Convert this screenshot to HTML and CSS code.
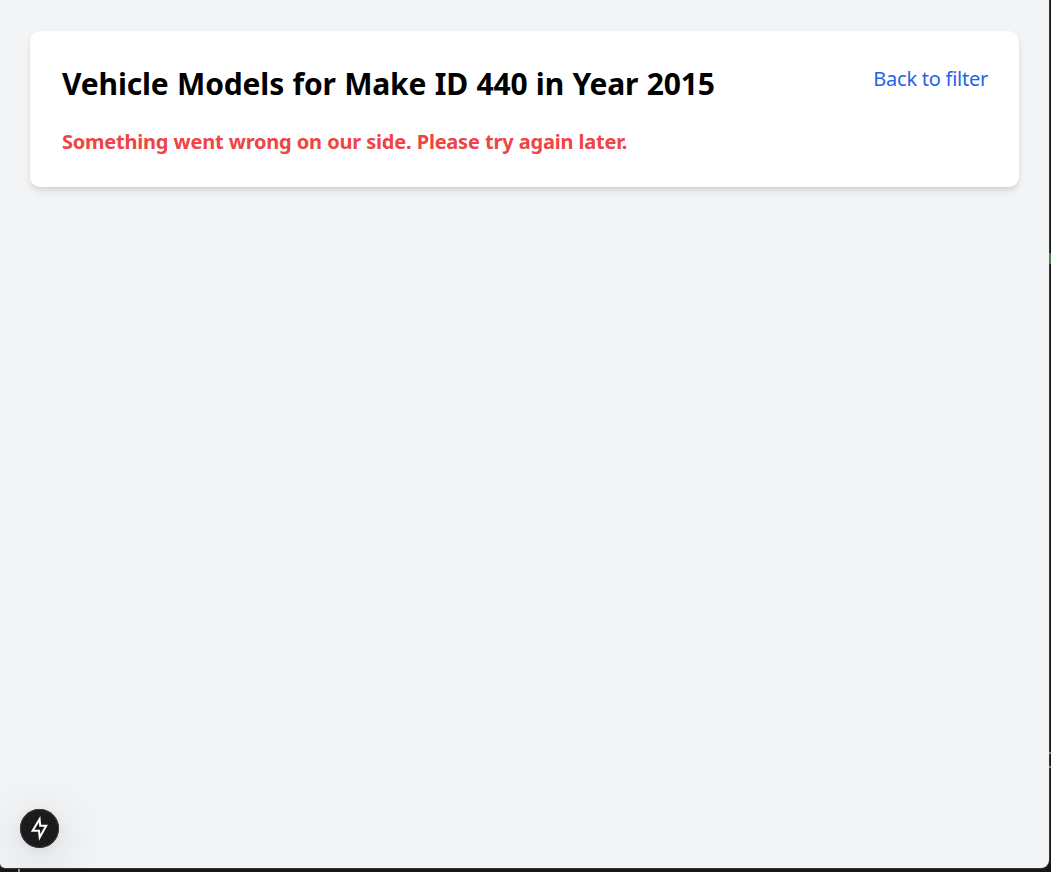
FILE: index.html
```html
<!DOCTYPE html>
<html lang="en">
<head>
<meta charset="utf-8">
<title>Vehicle Models</title>
<link rel="stylesheet" href="styles.css">
</head>
<body>
<div class="page">
  <main class="card">
    <div class="content">
      <h1 class="title">Vehicle Models for Make ID 440 in Year 2015</h1>
      <p class="error">Something went wrong on our side. Please try again later.</p>
    </div>
    <a class="back">Back to filter</a>
  </main>
  <button class="dev-badge" aria-label="Route status">
    <svg class="bolt" width="39" height="39" viewBox="0 0 39 39">
      <path d="M19.6 10.2 20.2 16.7H26.2L19.7 28.4 19 21.8H12.6Z" fill="none" stroke="#fff" stroke-width="2"/>
    </svg>
  </button>
</div>
<i class="edge-mark green"></i>
<i class="edge-mark tan-top"></i>
<i class="edge-mark tan-bottom"></i>
<i class="edge-mark bottom"></i>
</body>
</html>
```
FILE: styles.css
```css
* { box-sizing: border-box; }
body {
  margin: 0;
  height: 872px;
  overflow: hidden;
  background: #15161a;
  font-family: "Segoe UI", "Noto Sans", sans-serif;
}
.page {
  position: relative;
  width: 1049px;
  height: 868px;
  padding: 31px 30px;
  background: #f3f4f6;
  border-radius: 0 0 8px 5px;
  box-shadow: 0 0 0 1px #36373b;
  overflow: hidden;
}
.card {
  display: flex;
  justify-content: space-between;
  align-items: flex-start;
  height: 156px;
  padding: 32px 31px 0 32px;
  background: #fff;
  border-radius: 10px;
  box-shadow: 0 5px 8px -1px rgba(0,0,0,.1), 0 2px 5px -2px rgba(0,0,0,.1);
}
.title, .error, .back { white-space: nowrap; }
.title {
  margin: 0 0 20px;
  font-size: 30px;
  line-height: 42px;
  font-weight: 700;
  letter-spacing: -.14px;
  word-spacing: .7px;
  color: #000;
}
.error {
  margin: 0;
  font-size: 20px;
  line-height: 33px;
  font-weight: 700;
  letter-spacing: -.23px;
  word-spacing: .4px;
  color: #ef4444;
}
.back {
  font-size: 20px;
  line-height: 32px;
  letter-spacing: -.25px;
  color: #2563eb;
}
.dev-badge {
  position: absolute;
  left: 20px;
  bottom: 20px;
  width: 39px;
  height: 39px;
  padding: 0;
  border: 0;
  border-radius: 50%;
  background: #1b1b1d;
  box-shadow: inset 0 0 0 1px #3b3b3d, 0 10px 50px rgba(0,0,0,.18), 0 2px 8px rgba(0,0,0,.06);
}
.bolt { display: block; }
.edge-mark { position: absolute; }
.green { left: 1049px; top: 253px; width: 2px; height: 11px; background: #3e8748; }
.tan-top { left: 1049px; top: 752px; width: 2px; height: 2px; background: #8b8678; }
.tan-bottom { left: 1049px; top: 766px; width: 2px; height: 2px; background: #8b8678; }
.bottom { left: 18px; top: 869px; width: 2px; height: 3px; background: #8e8c96; }
```
